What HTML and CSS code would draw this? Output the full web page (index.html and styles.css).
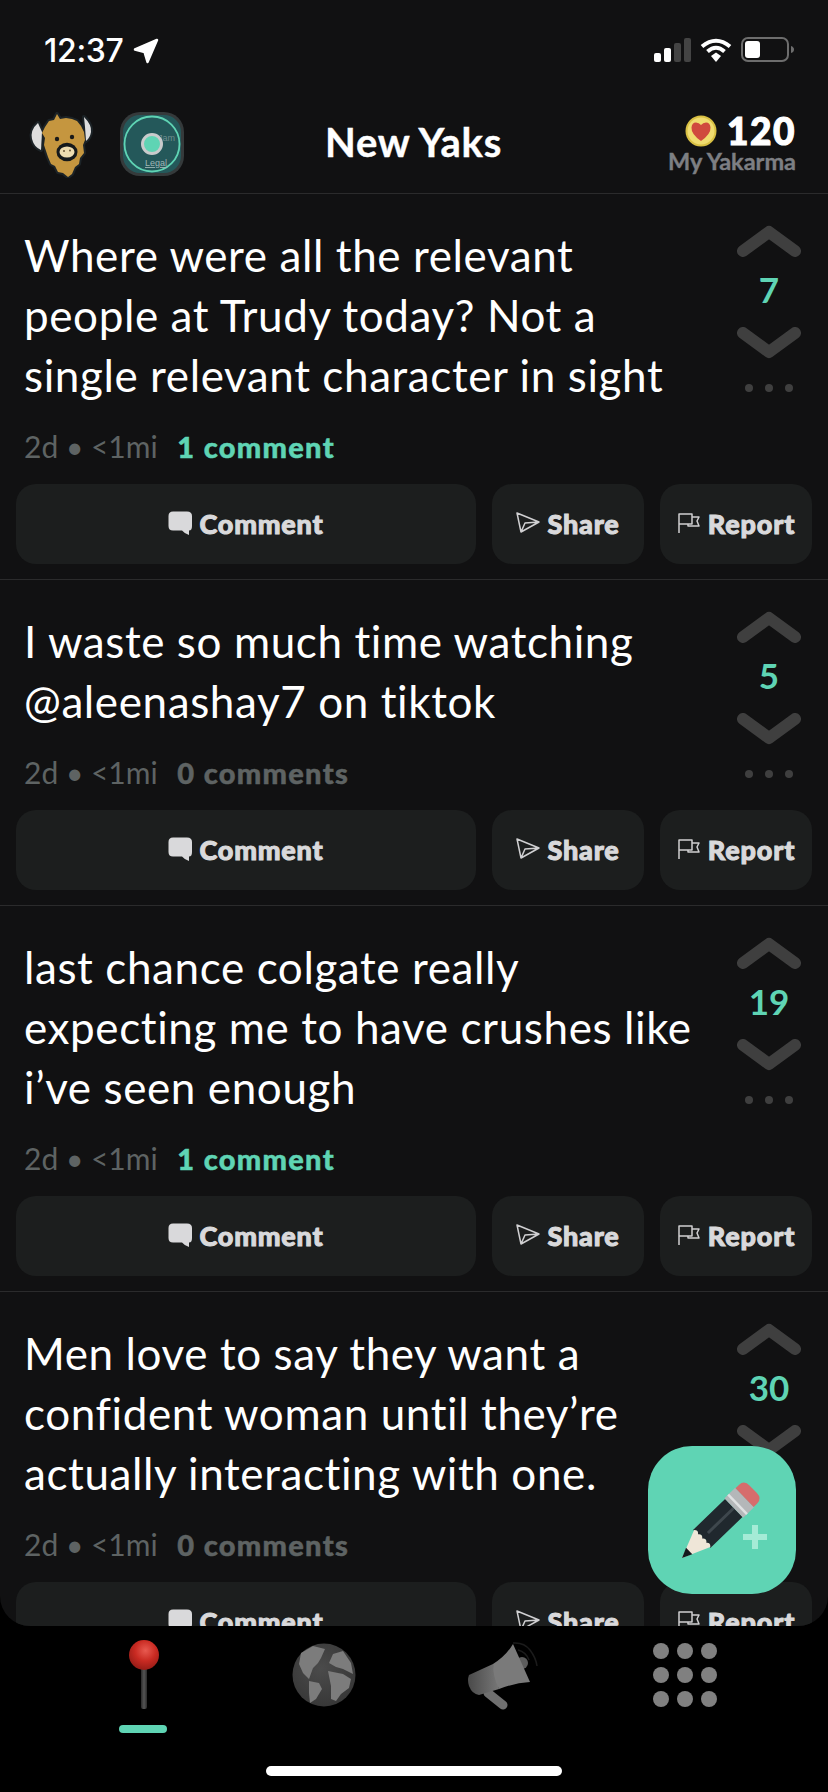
FILE: index.html
```html
<!DOCTYPE html>
<html lang="en">
<head>
<meta charset="utf-8">
<title>New Yaks</title>
<link rel="stylesheet" href="styles.css">
</head>
<body>
<svg class="sprite" aria-hidden="true">
  <symbol id="i-up" viewBox="0 0 64 32"><path d="M6 26 L32 7 L58 26" fill="none" stroke="#3f3f3f" stroke-width="12" stroke-linecap="round" stroke-linejoin="round"/></symbol>
  <symbol id="i-down" viewBox="0 0 64 32"><path d="M6 6 L32 25 L58 6" fill="none" stroke="#3f3f3f" stroke-width="12" stroke-linecap="round" stroke-linejoin="round"/></symbol>
  <symbol id="i-comment" viewBox="0 0 24 24"><path d="M5 0.500 H19 Q24 0.500 24 5 V15 Q24 19.500 21 19.500 V24 Q17 23 14 19.500 H5 Q0.500 19.500 0.500 15 V5 Q0.500 0.500 5 0.500 Z" fill="#d9d9db"/></symbol>
  <symbol id="i-share" viewBox="0 0 24 24"><path d="M1 2 L23 11 L5 21 Z M1 2 L23 11 L9 12 L5 21" fill="none" stroke="#d0d0d2" stroke-width="1.500" stroke-linejoin="round"/></symbol>
  <symbol id="i-flag" viewBox="0 0 24 24"><path d="M2 22 V3 H15 V13 H2 M15 6 H22 L20 10 L22 15 H11 V13" fill="none" stroke="#cfcfd1" stroke-width="1.500" stroke-linejoin="round"/></symbol>
</svg>

<div class="app">
  <main class="screen">
    <div class="statusbar">
      <div class="clock">
        <span>12:37</span>
        <svg class="loc" viewBox="0 0 26 26"><path d="M24 2 L14.500 24 L11.500 14 L2 11.500 Z" fill="#fff" stroke="#fff" stroke-width="2.500" stroke-linejoin="round"/></svg>
      </div>
      <div class="sysicons">
        <svg class="signal" viewBox="0 0 37 24">
          <rect x="0" y="15" width="7" height="9" rx="2" fill="#fff"/>
          <rect x="10" y="10" width="7" height="14" rx="2" fill="#fff"/>
          <rect x="20" y="5" width="7" height="19" rx="2" fill="#444"/>
          <rect x="30" y="0" width="7" height="24" rx="2" fill="#444"/>
        </svg>
        <svg class="wifi" viewBox="0 0 32 24">
          <path d="M2 8.500 Q16 -3 30 8.500" fill="none" stroke="#fff" stroke-width="4"/>
          <path d="M7.500 13.500 Q16 6 24.500 13.500" fill="none" stroke="#fff" stroke-width="4"/>
          <path d="M11 18 L16 14.500 L21 18 L16 24 Z" fill="#fff"/>
        </svg>
        <svg class="battery" viewBox="0 0 54 25">
          <rect x="1" y="1" width="46" height="23" rx="6" fill="none" stroke="#6d6d6d" stroke-width="2"/>
          <rect x="4" y="4" width="15" height="17" rx="3" fill="#fff"/>
          <path d="M50 9 Q53 10 53 12.500 Q53 15 50 16 Z" fill="#6d6d6d"/>
        </svg>
      </div>
    </div>

    <header class="topbar">
      <div class="top-left">
        <svg class="yak" viewBox="0 0 66 66">
          <path class="yak-line" d="M11 11 Q3 18 5 27 Q7 35 14 38 L15 20 Z"/>
          <path class="yak-line" d="M57 5 Q65 13 64 20 Q63 26 59 29 L58 15 Z"/>
          <path class="yak-line" d="M22 9 L27 8 L30 2 L33 7 L39 6 L45 7 L50 9 L54 14 L57 20 L58 28 L56 33 L57 41 L53 46 L52 52 L48 55 L45 62 L41 65 L36 61 L31 60 L28 54 L24 52 L21 45 L19 39 L17 33 L18 26 L15 21 L18 15 Z"/>
          <path d="M11 11 Q3 18 5 27 Q7 35 14 38 L15 20 Z" fill="#dedede"/>
          <path d="M57 5 Q65 13 64 20 Q63 26 59 29 L58 15 Z" fill="#dedede"/>
          <path d="M22 9 L27 8 L30 2 L33 7 L39 6 L45 7 L50 9 L54 14 L57 20 L58 28 L56 33 L57 41 L53 46 L52 52 L48 55 L45 62 L41 65 L36 61 L31 60 L28 54 L24 52 L21 45 L19 39 L17 33 L18 26 L15 21 L18 15 Z" fill="#c5963f"/>
          <circle cx="30" cy="27" r="2.200" fill="#1a1a1a"/>
          <circle cx="45" cy="25" r="2.200" fill="#1a1a1a"/>
          <ellipse cx="40" cy="40" rx="10.500" ry="9.300" fill="#15191b"/>
          <ellipse cx="40" cy="40" rx="7.500" ry="5.500" fill="#eddcb0"/>
          <circle cx="37" cy="39" r="1" fill="#6b5a3a"/>
          <circle cx="43" cy="38.500" r="1" fill="#6b5a3a"/>
        </svg>
        <svg class="legal" viewBox="0 0 64 64">
          <rect width="64" height="64" rx="20" fill="#353a3b"/>
          <rect x="3" y="3" width="58" height="58" rx="17" fill="#24585a"/>
          <circle cx="32" cy="32" r="27.500" fill="none" stroke="#5fd4b4" stroke-width="1.800"/>
          <text class="legal-name" x="38" y="29">Jam</text>
          <text class="legal-word" x="25" y="54">Legal</text>
          <circle cx="32" cy="32" r="9.500" fill="#5fd4b4" stroke="#c9cbcc" stroke-width="3"/>
        </svg>
      </div>
      <h1 class="title">New Yaks</h1>
      <div class="karma">
        <div class="karma-top">
          <svg class="coin" viewBox="0 0 32 32">
            <circle cx="16" cy="16" r="15.500" fill="#d9c043"/>
            <circle cx="16" cy="16" r="13.500" fill="#f0dc70"/>
            <path d="M16 26 Q6 19 6.500 12.500 Q7 7.500 11 7.500 Q14 7.500 16 10 Q18 7.500 21 7.500 Q25 7.500 25.500 12.500 Q26 19 16 26 Z" fill="#d0493e"/>
          </svg>
          <span class="karma-num">120</span>
        </div>
        <div class="karma-label">My Yakarma</div>
      </div>
    </header>

    <section class="feed">
      <article class="post">
        <div class="post-main">
          <div class="post-copy">
            <p class="post-text">Where were all the relevant<br>people at Trudy today? Not a<br>single relevant character in sight</p>
            <p class="meta">2d • &lt;1mi <span class="count is-active">1 comment</span></p>
          </div>
          <div class="votes">
            <svg class="chev"><use href="#i-up"/></svg>
            <span class="score">7</span>
            <svg class="chev"><use href="#i-down"/></svg>
            <div class="more"><i></i><i></i><i></i></div>
          </div>
        </div>
        <div class="actions">
          <button class="btn btn-wide"><svg class="ico"><use href="#i-comment"/></svg>Comment</button>
          <button class="btn"><svg class="ico"><use href="#i-share"/></svg>Share</button>
          <button class="btn"><svg class="ico"><use href="#i-flag"/></svg>Report</button>
        </div>
      </article>

      <article class="post">
        <div class="post-main">
          <div class="post-copy">
            <p class="post-text">I waste so much time watching<br>@aleenashay7 on tiktok</p>
            <p class="meta">2d • &lt;1mi <span class="count">0 comments</span></p>
          </div>
          <div class="votes">
            <svg class="chev"><use href="#i-up"/></svg>
            <span class="score">5</span>
            <svg class="chev"><use href="#i-down"/></svg>
            <div class="more"><i></i><i></i><i></i></div>
          </div>
        </div>
        <div class="actions">
          <button class="btn btn-wide"><svg class="ico"><use href="#i-comment"/></svg>Comment</button>
          <button class="btn"><svg class="ico"><use href="#i-share"/></svg>Share</button>
          <button class="btn"><svg class="ico"><use href="#i-flag"/></svg>Report</button>
        </div>
      </article>

      <article class="post">
        <div class="post-main">
          <div class="post-copy">
            <p class="post-text">last chance colgate really<br>expecting me to have crushes like<br>i’ve seen enough</p>
            <p class="meta">2d • &lt;1mi <span class="count is-active">1 comment</span></p>
          </div>
          <div class="votes">
            <svg class="chev"><use href="#i-up"/></svg>
            <span class="score">19</span>
            <svg class="chev"><use href="#i-down"/></svg>
            <div class="more"><i></i><i></i><i></i></div>
          </div>
        </div>
        <div class="actions">
          <button class="btn btn-wide"><svg class="ico"><use href="#i-comment"/></svg>Comment</button>
          <button class="btn"><svg class="ico"><use href="#i-share"/></svg>Share</button>
          <button class="btn"><svg class="ico"><use href="#i-flag"/></svg>Report</button>
        </div>
      </article>

      <article class="post">
        <div class="post-main">
          <div class="post-copy">
            <p class="post-text">Men love to say they want a<br>confident woman until they’re<br>actually interacting with one.</p>
            <p class="meta">2d • &lt;1mi <span class="count">0 comments</span></p>
          </div>
          <div class="votes">
            <svg class="chev"><use href="#i-up"/></svg>
            <span class="score">30</span>
            <svg class="chev"><use href="#i-down"/></svg>
            <div class="more"><i></i><i></i><i></i></div>
          </div>
        </div>
        <div class="actions">
          <button class="btn btn-wide"><svg class="ico"><use href="#i-comment"/></svg>Comment</button>
          <button class="btn"><svg class="ico"><use href="#i-share"/></svg>Share</button>
          <button class="btn"><svg class="ico"><use href="#i-flag"/></svg>Report</button>
        </div>
      </article>
    </section>
  </main>

  <button class="fab" aria-label="New yak">
    <svg class="fab-art" viewBox="0 0 148 148">
      <g transform="translate(34 112) rotate(-44)">
        <path d="M0 0 L30 -12.500 V12.500 Z" fill="#efe6d8"/>
        <path d="M0 0 L10 -4.500 L10 4.500 Z" fill="#14191d"/>
        <path d="M27 -12.500 H72 V12.500 H27 Q32 9 28 6 Q32 3 28 0 Q32 -3 28 -6 Q32 -9 27 -12.500 Z" fill="#20282e"/>
        <path d="M36 -1.500 H72 V1.500 H36 Z" fill="#3e474d"/>
        <rect x="72" y="-13.500" width="15" height="27" fill="#b4b7b9"/>
        <rect x="76" y="-13.500" width="2.500" height="27" fill="#dfe1e2"/>
        <path d="M87 -13 H92 Q99 -13 99 -5 V5 Q99 13 92 13 H87 Z" fill="#d66c6c"/>
      </g>
      <path d="M104 79 H110 V88 H119 V94 H110 V103 H104 V94 H95 V88 H104 Z" fill="#a4ebd6"/>
    </svg>
  </button>

  <nav class="tabbar">
    <div class="tab tab-active">
      <svg class="tab-art" viewBox="0 0 64 80">
        <defs>
          <radialGradient id="ball" cx="0.550" cy="0.350" r="0.700"><stop offset="0" stop-color="#e85a50"/><stop offset="0.500" stop-color="#c92a22"/><stop offset="1" stop-color="#8f1a15"/></radialGradient>
          <linearGradient id="stem" x1="0" x2="1" y1="0" y2="0"><stop offset="0" stop-color="#2b2b2b"/><stop offset="0.500" stop-color="#555"/><stop offset="1" stop-color="#2b2b2b"/></linearGradient>
        </defs>
        <rect x="30" y="20" width="6" height="49" rx="2" fill="url(#stem)"/>
        <circle cx="33" cy="15" r="15" fill="url(#ball)"/>
      </svg>
    </div>
    <div class="tab">
      <svg class="tab-art globe" viewBox="0 0 64 64">
        <defs><radialGradient id="earth" cx="0.450" cy="0.400" r="0.650"><stop offset="0" stop-color="#4b4b4b"/><stop offset="1" stop-color="#363636"/></radialGradient></defs>
        <circle cx="32" cy="32" r="31.500" fill="url(#earth)"/>
        <path d="M9 10 L21 3 L33 6 L29 15 L26 20 L21 25 L17 36 L11 30 L7 21 Z" fill="#7c7c7c"/>
        <path d="M17 38 L27 40 L30 46 L24 56 L18 60 L17 50 Z" fill="#7c7c7c"/>
        <path d="M41 11 L51 8 L59 20 L61 31 L51 26 L44 24 L37 20 Z" fill="#7c7c7c"/>
        <path d="M36 28 L51 31 L59 36 L57 45 L49 51 L44 58 L39 56 L39 43 Z" fill="#7c7c7c"/>
      </svg>
    </div>
    <div class="tab">
      <svg class="tab-art horn" viewBox="0 0 76 68">
        <defs><linearGradient id="hornbody" x1="0" x2="1" y1="0" y2="0"><stop offset="0" stop-color="#4a4a4a"/><stop offset="1" stop-color="#777"/></linearGradient></defs>
        <path d="M47 1 Q58 0 64 8 Q70 16 71 24" fill="none" stroke="#1b1b1b" stroke-width="1.500"/>
        <path d="M52 8 Q60 10 63 18" fill="none" stroke="#1b1b1b" stroke-width="1.500"/>
        <path d="M22 51 L37 63" fill="none" stroke="#6f6f6f" stroke-width="9" stroke-linecap="round"/>
        <circle cx="56" cy="21" r="6" fill="#5d5d5d"/>
        <path d="M27 22 L3 33 Q1 38 3 44 Q6 52 13 53 L33 47 Z" fill="url(#hornbody)"/>
        <path d="M47 2 Q40 14 27 22 Q27 36 33 47 Q48 41 64 40 Q56 22 47 2 Z" fill="#7a7a7a"/>
      </svg>
    </div>
    <div class="tab">
      <div class="dots">
        <i></i><i></i><i></i><i></i><i></i><i></i><i></i><i></i><i></i>
      </div>
    </div>
    <div class="home-bar"></div>
  </nav>
</div>
</body>
</html>
```

FILE: styles.css
```css
* { box-sizing: border-box; }

html, body {
  margin: 0;
  padding: 0;
  background: #000;
}

.sprite {
  position: absolute;
  width: 0;
  height: 0;
}

.app {
  position: relative;
  width: 828px;
  height: 1792px;
  display: flex;
  flex-direction: column;
  overflow: hidden;
  background: #000;
  color: #fff;
  font-family: "Lato", "Liberation Sans", sans-serif;
  font-variant-ligatures: none;
}

.screen {
  flex: 0 0 1626px;
  display: flex;
  flex-direction: column;
  background: #111112;
  border-radius: 0 0 30px 30px;
  overflow: hidden;
}

/* status bar */
.statusbar {
  flex: 0 0 100px;
  display: flex;
  justify-content: space-between;
  padding: 36px 33px 0 44px;
}

.clock {
  display: flex;
  align-items: flex-start;
  gap: 9px;
  font-family: "Inter", "Liberation Sans", sans-serif;
  font-size: 32px;
  font-weight: 500;
  line-height: 30px;
  letter-spacing: -0.3px;
}

.loc { width: 26px; height: 26px; margin-top: 2px; }

.sysicons {
  display: flex;
  align-items: flex-start;
  gap: 9px;
}

.signal { width: 37px; height: 24px; margin-top: 2px; }
.wifi { width: 32px; height: 24px; margin-top: 2px; }
.battery { width: 54px; height: 25px; margin-top: 1px; }

/* header */
.topbar {
  flex: 0 0 94px;
  display: grid;
  grid-template-columns: 1fr auto 1fr;
  align-items: start;
  padding: 0 32px 0 27px;
  border-bottom: 1px solid #2b2b2c;
}

.top-left {
  display: flex;
  align-items: flex-start;
  gap: 27px;
  padding-top: 12px;
}

.yak { width: 66px; height: 66px; }
.legal { width: 64px; height: 64px; }

.yak-line {
  fill: #1c2327;
  stroke: #1c2327;
  stroke-width: 4;
  stroke-linejoin: round;
}

.legal-name {
  font-family: "Liberation Sans", sans-serif;
  font-size: 9px;
  fill: #6f8d8e;
}

.legal-word {
  font-family: "Liberation Sans", sans-serif;
  font-size: 9px;
  fill: #9fb5b5;
  text-decoration: underline;
}

.title {
  margin: 0;
  padding-top: 19px;
  font-size: 40px;
  line-height: 46px;
  font-weight: 700;
  letter-spacing: 0.7px;
  color: #fff;
  -webkit-text-stroke: 0.4px #fff;
  transform: translateX(2px);
}

.karma {
  justify-self: end;
  display: flex;
  flex-direction: column;
  align-items: flex-end;
  padding-top: 14px;
}

.karma-top {
  display: flex;
  align-items: center;
  gap: 10px;
  height: 34px;
}

.coin { width: 32px; height: 32px; }

.karma-num {
  font-size: 37px;
  font-weight: 900;
  line-height: 34px;
  letter-spacing: 1.500px;
  -webkit-text-stroke: 1.100px #fff;
}

.karma-label {
  font-size: 23.500px;
  font-weight: 700;
  line-height: 27px;
  color: #7d7f83;
  -webkit-text-stroke: 0.4px #7d7f83;
}

/* feed */
.feed {
  flex: 1;
  overflow: hidden;
}

.post {
  padding: 31px 16px 15px;
  border-bottom: 1px solid #2b2b2c;
}

.post-main {
  display: flex;
  justify-content: space-between;
  align-items: flex-start;
}

.post-copy {
  padding-left: 8px;
}

.post-text {
  margin: 0;
  font-size: 44px;
  line-height: 60px;
  font-weight: 400;
  letter-spacing: 0.6px;
  white-space: nowrap;
  color: #fff;
}

.meta {
  height: 40px;
  margin: 21px 0 18px;
  font-size: 30px;
  line-height: 40px;
  color: #5e6363;
  white-space: nowrap;
}

.count {
  margin-left: 12px;
  font-size: 29px;
  line-height: 30px;
  font-weight: 900;
  letter-spacing: 1.300px;
  color: #5e6363;
  -webkit-text-stroke: 0.5px #5e6363;
}

.count.is-active {
  color: #5fd4b4;
  -webkit-text-stroke-color: #5fd4b4;
}

.votes {
  flex: 0 0 64px;
  display: flex;
  flex-direction: column;
  align-items: center;
  margin-right: 11px;
}

.chev {
  display: block;
  width: 64px;
  height: 32px;
}

.score {
  height: 64px;
  margin-bottom: 6px;
  line-height: 64px;
  font-size: 35px;
  font-weight: 700;
  color: #5fd4b4;
}

.more {
  display: flex;
  gap: 12px;
  margin-top: 25px;
}

.more i {
  width: 8px;
  height: 8px;
  border-radius: 50%;
  background: #3f3f3f;
}

.actions {
  display: flex;
  gap: 16px;
}

.btn {
  flex: 0 0 152px;
  height: 80px;
  display: flex;
  align-items: center;
  justify-content: center;
  gap: 7px;
  border: 0;
  padding: 0 0 2px;
  border-radius: 20px;
  background: #1c1e1e;
  color: #d9d9db;
  font-family: "Lato", "Liberation Sans", sans-serif;
  font-size: 27px;
  font-weight: 900;
  letter-spacing: 0.8px;
  -webkit-text-stroke: 1px #d9d9db;
}

.btn-wide { flex: 0 0 460px; }

.ico { width: 24px; height: 24px; }

/* floating compose */
.fab {
  position: absolute;
  left: 648px;
  top: 1446px;
  width: 148px;
  height: 148px;
  padding: 0;
  border: 0;
  border-radius: 44px;
  background: #5fd4b4;
}

.fab-art {
  display: block;
  width: 148px;
  height: 148px;
}

/* tab bar */
.tabbar {
  position: relative;
  flex: 1;
  display: flex;
  align-items: flex-start;
  padding: 14px 0 0 53px;
  background: #000;
}

.tab {
  position: relative;
  flex: 0 0 180.500px;
  display: flex;
  justify-content: center;
}

.tab-art {
  display: block;
  width: 64px;
  height: 80px;
}

.tab-active::after {
  content: "";
  position: absolute;
  left: 66px;
  top: 85px;
  width: 48px;
  height: 8px;
  border-radius: 4px;
  background: #5fd4b4;
}

.globe {
  width: 64px;
  height: 64px;
  margin-top: 3px;
}

.horn {
  width: 76px;
  height: 68px;
  margin-top: 2px;
}

.dots {
  display: grid;
  grid-template-columns: repeat(3, 16px);
  gap: 8px;
  margin-top: 3px;
}

.dots i {
  width: 16px;
  height: 16px;
  border-radius: 50%;
  background: #808080;
}

.home-bar {
  position: absolute;
  left: 266px;
  top: 140px;
  width: 296px;
  height: 10px;
  border-radius: 5px;
  background: #fff;
}
```
